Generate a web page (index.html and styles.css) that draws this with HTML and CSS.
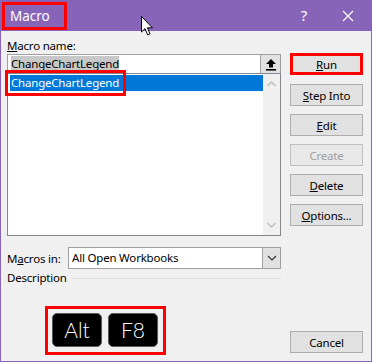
FILE: index.html
```html
<!DOCTYPE html>
<html lang="en">
<head>
    <meta charset="UTF-8">
    <title>Macro</title>
    <link rel="stylesheet" href="styles.css">
</head>
<body>

    <div class="window">
        <div class="titlebar">
            <span class="title">Macro</span>
            <div class="title-buttons">
                <span class="help">?</span>
                <svg class="close" width="12" height="12" viewBox="0 0 12 12">
                    <path d="M1 1 L11 11 M11 1 L1 11" stroke="#fff" stroke-width="1.2" fill="none"/>
                </svg>
            </div>
            <!-- mouse pointer over the title bar -->
            <svg class="cursor" width="13" height="20" viewBox="0 0 13 20">
                <path d="M0.5 0.5 L0.5 16 L4 12.6 L6.6 18.8 L9 17.8 L6.4 11.8 L11.4 11.8 Z" fill="#fff" stroke="#000" stroke-width="1"/>
            </svg>
        </div>

        <div class="main">
            <div class="left">
                <div class="label"><u>M</u>acro name:</div>
                <div class="name-row">
                    <div class="name-input"><span class="sel-text">ChangeChartLegend</span></div>
                    <div class="name-btn">
                        <svg width="12" height="13" viewBox="0 0 12 13">
                            <path d="M6 1 L11 6 L8 6 L8 9.5 L4 9.5 L4 6 L1 6 Z" fill="#000"/>
                            <rect x="1" y="11" width="10" height="1.6" fill="#000"/>
                        </svg>
                    </div>
                </div>
                <div class="list">
                    <div class="list-items">
                        <div class="item selected"><span class="marked">ChangeChartLegend</span></div>
                    </div>
                    <div class="scrollbar">
                        <svg width="9" height="6" viewBox="0 0 9 6"><path d="M0.5 5 L4.5 1 L8.5 5" stroke="#c2c2c2" stroke-width="1.6" fill="none"/></svg>
                        <svg width="9" height="6" viewBox="0 0 9 6"><path d="M0.5 1 L4.5 5 L8.5 1" stroke="#c2c2c2" stroke-width="1.6" fill="none"/></svg>
                    </div>
                </div>
                <div class="macros-in">
                    <span class="label">M<u>a</u>cros in:</span>
                    <div class="select">
                        <span class="select-text">All Open Workbooks</span>
                        <div class="select-btn">
                            <svg width="10" height="6" viewBox="0 0 10 6"><path d="M1 1 L5 5 L9 1" stroke="#333" stroke-width="1.2" fill="none"/></svg>
                        </div>
                    </div>
                </div>
                <div class="description">
                    <span class="label">Description</span>
                    <span class="rule"></span>
                </div>
            </div>

            <div class="right">
                <button class="btn run"><u>R</u>un</button>
                <button class="btn"><u>S</u>tep Into</button>
                <button class="btn"><u>E</u>dit</button>
                <button class="btn" disabled>Create</button>
                <button class="btn"><u>D</u>elete</button>
                <button class="btn"><u>O</u>ptions...</button>
            </div>
        </div>

        <div class="footer">
            <div class="keys">
                <span class="key">Alt</span>
                <span class="key">F8</span>
            </div>
            <button class="btn">Cancel</button>
        </div>
    </div>

</body>
</html>
```

FILE: styles.css
```css
body {
    margin: 0;
    padding: 0;
    font-family: 'Noto Sans', sans-serif;
    font-size: 11.5px;
    letter-spacing: -0.2px;
    color: #000;
}
.window {
    width: 372px;
    height: 362px;
    box-sizing: border-box;
    border: 1px solid #8764b8;
    border-top: none;
    background-color: #f0f0f0;
}
.titlebar {
    position: relative;
    height: 31px;
    margin: 0 -1px;
    background-color: #8764b8;
    display: flex;
    justify-content: space-between;
    align-items: flex-start;
}
.title {
    margin: 2px 0 0 2px;
    width: 54px;
    height: 22px;
    padding-left: 5px;
    border: 3px solid #ff0000;
    color: #fff;
    font-size: 13.5px;
    letter-spacing: 0;
    line-height: 22px;
}
.title-buttons {
    display: flex;
    align-items: center;
    gap: 35px;
    margin: 8px 18px 0 0;
}
.help {
    color: #fff;
    font-size: 15px;
    line-height: 15px;
}
.close {
    margin-top: 1px;
}
.cursor {
    position: absolute;
    left: 141px;
    top: 16px;
}
.main {
    display: flex;
    gap: 9px;
    padding-left: 6px;
}
.left {
    width: 274px;
}
.label {
    padding-top: 6px;
    height: 17px;
    line-height: 17px;
}
.name-row {
    display: flex;
    height: 19px;
}
.name-input {
    flex: 1;
    background-color: #fff;
    border: 1px solid #a0a0a0;
    border-bottom: none;
    border-right: none;
    padding-left: 3px;
    line-height: 17px;
}
.sel-text {
    background-color: #c8c8c8;
    display: inline-block;
    line-height: 16px;
    margin-top: 1px;
}
.name-btn {
    width: 19px;
    background-color: #e1e1e1;
    border: 1px solid #a0a0a0;
    border-bottom: none;
    display: flex;
    justify-content: center;
    align-items: center;
}
.list {
    height: 161px;
    border: 1px solid #828790;
    background-color: #fff;
    display: flex;
}
.list-items {
    flex: 1;
    padding: 1px 0 0 2px;
}
.item {
    height: 16px;
    line-height: 16px;
}
.selected {
    background-color: #0078d7;
    color: #fff;
}
.marked {
    display: inline-block;
    padding: 0 2px 0 1px;
    outline: 3px solid #ff0000;
    outline-offset: 2px;
}
.scrollbar {
    width: 17px;
    background-color: #f0f0f0;
    display: flex;
    flex-direction: column;
    justify-content: space-between;
    align-items: center;
    padding: 7px 0 7px;
}
.macros-in {
    display: flex;
    align-items: center;
    margin-top: 11px;
}
.macros-in .label {
    padding-top: 0;
    width: 61px;
    height: auto;
}
.select {
    flex: 1;
    height: 20px;
    display: flex;
    background-color: #fff;
    border: 1px solid #a0a0a0;
}
.select-text {
    flex: 1;
    padding-left: 3px;
    line-height: 20px;
}
.select-btn {
    width: 17px;
    background-color: #e1e1e1;
    border-left: 1px solid #a0a0a0;
    display: flex;
    justify-content: center;
    align-items: center;
}
.description {
    display: flex;
    align-items: center;
    gap: 6px;
    margin-top: 1px;
}
.description .label {
    padding-top: 0;
    height: 16px;
    line-height: 16px;
}
.rule {
    flex: 1;
    height: 1px;
    background-color: #dcdcdc;
}
.right {
    width: 73px;
    padding-top: 22px;
    display: flex;
    flex-direction: column;
    gap: 8px;
}
.btn {
    width: 73px;
    height: 22px;
    padding: 0;
    font-family: 'Noto Sans', sans-serif;
    font-size: 11.5px;
    letter-spacing: -0.2px;
    color: #000;
    background-color: #e1e1e1;
    border: 1px solid #adadad;
}
.btn.run {
    border: 3px solid #ff0000;
    margin-bottom: 1px;
}
.btn:disabled {
    color: #a0a0a0;
    border-color: #bfbfbf;
    background-color: #e8e8e8;
}
.footer {
    display: flex;
    justify-content: space-between;
    align-items: flex-end;
    padding: 20px 8px 0 44px;
}
.keys {
    display: flex;
    gap: 6px;
    padding: 4px 5px 5px 4px;
    border: 3px solid #ff0000;
}
.key {
    width: 48px;
    height: 32px;
    background-color: #000;
    border: 1px solid #5a5a5a;
    border-radius: 5px;
    color: #fff;
    font-family: 'Lato', sans-serif;
    font-weight: 300;
    font-size: 21px;
    letter-spacing: 0;
    line-height: 32px;
    text-align: center;
}
.footer .btn {
    margin-bottom: 2px;
}
```
